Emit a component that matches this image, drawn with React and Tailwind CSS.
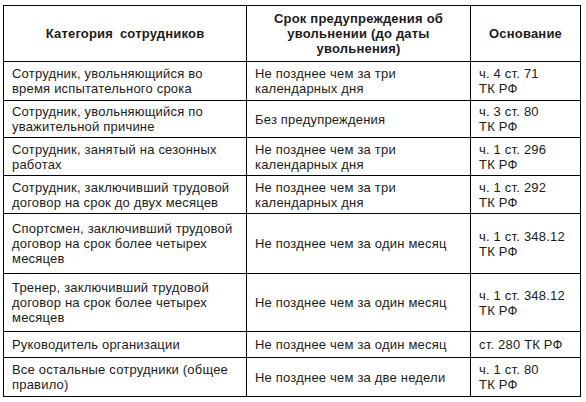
import React from "react";

const rows = [
  {
    h: "h-[39px]",
    who: ["Сотрудник, увольняющийся во", "время испытательного срока"],
    term: ["Не позднее чем за три", "календарных дня"],
    base: ["ч. 4 ст. 71", "ТК РФ"],
  },
  {
    h: "h-[37px]",
    who: ["Сотрудник, увольняющийся по", "уважительной причине"],
    term: ["Без предупреждения"],
    base: ["ч. 3 ст. 80", "ТК РФ"],
  },
  {
    h: "h-[38px]",
    who: ["Сотрудник, занятый на сезонных", "работах"],
    term: ["Не позднее чем за три", "календарных дня"],
    base: ["ч. 1 ст. 296", "ТК РФ"],
  },
  {
    h: "h-[38px]",
    who: ["Сотрудник, заключивший трудовой", "договор на срок до двух месяцев"],
    term: ["Не позднее чем за три", "календарных дня"],
    base: ["ч. 1 ст. 292", "ТК РФ"],
  },
  {
    h: "h-[60px]",
    who: ["Спортсмен, заключивший трудовой", "договор на срок более четырех", "месяцев"],
    term: ["Не позднее чем за один месяц"],
    base: ["ч. 1 ст. 348.12", "ТК РФ"],
  },
  {
    h: "h-[58px]",
    who: ["Тренер, заключивший трудовой", "договор на срок более четырех", "месяцев"],
    term: ["Не позднее чем за один месяц"],
    base: ["ч. 1 ст. 348.12", "ТК РФ"],
  },
  {
    h: "h-[26px]",
    who: ["Руководитель организации"],
    term: ["Не позднее чем за один месяц"],
    base: ["ст. 280 ТК РФ"],
  },
  {
    h: "h-[39px]",
    who: ["Все остальные сотрудники (общее", "правило)"],
    term: ["Не позднее чем за две недели"],
    base: ["ч. 1 ст. 80", "ТК РФ"],
  },
];

function Lines({ items }) {
  return items.map((line, i) => (
    <React.Fragment key={i}>
      {i > 0 && <br />}
      {line}
    </React.Fragment>
  ));
}

export default function App() {
  return (
    <div className="w-[586px] h-[402px] bg-white pl-[3px] pt-[5px] font-['Liberation_Sans',Arial,sans-serif] text-[13px] leading-[15px] tracking-[0.2px] text-[#1c1c1c]">
      <table className="table-fixed border-collapse w-[577px]">
        <colgroup>
          <col className="w-[243px]" />
          <col className="w-[224px]" />
          <col className="w-[110px]" />
        </colgroup>
        <thead>
          <tr className="h-[56px]">
            <th className="border border-black font-bold text-center align-middle [word-spacing:3px]">
              Категория сотрудников
            </th>
            <th className="border border-black font-bold text-center align-middle">
              Срок предупреждения об
              <br />
              увольнении (до даты
              <br />
              увольнения)
            </th>
            <th className="border border-black font-bold text-center align-middle">
              Основание
            </th>
          </tr>
        </thead>
        <tbody>
          {rows.map((r, i) => (
            <tr key={i} className={r.h}>
              <td className="border border-black px-2 align-middle">
                <Lines items={r.who} />
              </td>
              <td className="border border-black px-2 align-middle">
                <Lines items={r.term} />
              </td>
              <td className="border border-black px-2 align-middle">
                <Lines items={r.base} />
              </td>
            </tr>
          ))}
        </tbody>
      </table>
    </div>
  );
}
